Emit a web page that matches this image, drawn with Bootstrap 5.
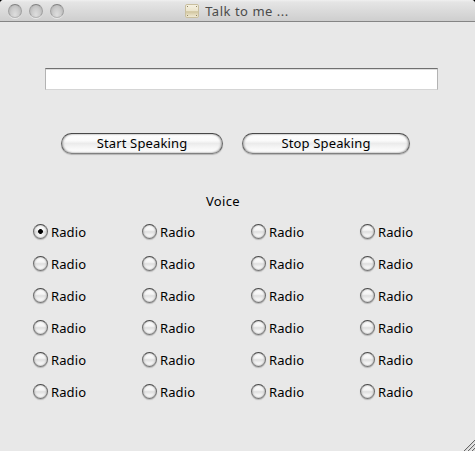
<!DOCTYPE html>
<html lang="en">
<head>
<meta charset="utf-8">
<meta name="viewport" content="width=device-width, initial-scale=1">
<title>Talk to me ...</title>
<link href="https://cdn.jsdelivr.net/npm/bootstrap@5.3.0/dist/css/bootstrap.min.css" rel="stylesheet">
<style>
html { background: #000; }
body { background: transparent; font: 13px/16px "Lucida Grande", "Noto Sans", "Open Sans", sans-serif; color: #000; }
.window { width: 475px; height: 451px; background: #e8e8e8; border-radius: 4px 4px 0 0; }
.titlebar { height: 22px; padding-right: 2px; background: linear-gradient(#f0f0f0 0, #e5e5e5 10%, #cecece 100%); border-bottom: 1px solid #858585; }
.lights { left: 8px; top: 4px; gap: 7px; }
.light { width: 14px; height: 14px; border-radius: 50%; border: 1px solid #a0a0a0; border-top-color: #808080; border-bottom-color: #b5b5b5; background: radial-gradient(ellipse at 50% 80%, #dedede 0, #cbcbcb 50%, #aaa 100%); box-shadow: 0 1px 0 #e9e9e9; }
.caption { color: #4b4b4b; font-size: 13px; letter-spacing: .52px; margin-left: 5px; }
.entry { width: 393px; height: 22px; margin: 46px 0 0 45px; padding: 0 3px; font-size: 13px; border-radius: 0; border: 1px solid #b3b3b3; border-top-color: #707070; border-bottom-color: #d5d5d5; box-shadow: inset 0 1px 0 #dedede; }
.actions { margin: 43px 0 0 61px; gap: 19px; }
.aqua { --bs-btn-color: #000; height: 21px; padding: 0 0 1px; font-size: 13px; line-height: 17px; letter-spacing: .15px; border: 1px solid #666; border-top-color: #484848; border-bottom-color: #808080; border-radius: 11px; background: linear-gradient(#fff 0, #fafafa 35%, #ebebeb 50%, #f5f5f5 70%, #fff 100%); box-shadow: 0 1px 1px #b5b5b5, inset 1px 0 2px #aaa, inset -1px 0 2px #aaa; }
.start { width: 162px; }
.stop { width: 168px; }
.voice { margin: 39px 0 0 206px; letter-spacing: .3px; }
.voices { margin: 14px 0 0 33px; grid-template-columns: repeat(4, 109px); grid-auto-rows: 32px; }
.voices label { height: 17px; gap: 3px; }
.voices span { padding-top: 1px; letter-spacing: .1px; }
.voices .form-check-input { width: 15px; height: 15px; margin: 0 0 1px; border: 1px solid #6f6f6f; border-top-color: #484848; border-bottom-color: #777; background: linear-gradient(#fff 0, #f4f4f4 40%, #dedede 52%, #f2f2f2 75%, #fff 100%); box-shadow: 0 1px 1px #b5b5b5, inset 0 0 2px #888; }
.voices .form-check-input:checked { background: radial-gradient(circle at 50% 50%, #000 0 2px, transparent 2.8px), linear-gradient(#fff 0, #f4f4f4 40%, #dedede 52%, #f2f2f2 75%, #fff 100%); }
.grip { right: 0; bottom: 0; }
</style>
<script src="https://cdn.jsdelivr.net/npm/bootstrap@5.3.0/dist/js/bootstrap.bundle.min.js"></script>
</head>
<body class="overflow-hidden">
<main class="window position-relative overflow-hidden">
  <header class="titlebar position-relative d-flex align-items-center justify-content-center">
    <div class="lights position-absolute d-flex"><span class="light"></span><span class="light"></span><span class="light"></span></div>
    <svg width="16" height="16" viewBox="0 0 16 16" aria-hidden="true">
      <defs><linearGradient id="plate" x2="0" y2="1"><stop stop-color="#f6f2e4"/><stop offset=".5" stop-color="#ebe4cb"/><stop offset=".55" stop-color="#cfc49d"/><stop offset=".75" stop-color="#e1d8b9"/><stop offset="1" stop-color="#f1ecd8"/></linearGradient></defs>
      <rect x="1.5" y="1.5" width="13" height="13" rx="1.5" fill="url(#plate)" stroke="#c9bf9f"/>
      <path d="M3 3.5h1M12 3.5h1M3 12.5h1M12 12.5h1" stroke="#8f8466"/>
    </svg>
    <span class="caption">Talk to me ...</span>
  </header>
  <input class="entry form-control" type="text" aria-label="Text to speak">
  <div class="actions d-flex">
    <button class="btn aqua start" type="button">Start Speaking</button>
    <button class="btn aqua stop" type="button">Stop Speaking</button>
  </div>
  <div class="voice">Voice</div>
  <div class="voices d-grid" id="voices"></div>
  <svg class="grip position-absolute" width="13" height="13" viewBox="0 0 13 13" aria-hidden="true">
    <path d="M2 13 13 2M6 13 13 6M10 13 13 10" stroke="#666" fill="none"/>
    <path d="M3.3 13 13 3.3M7.3 13 13 7.3M11.3 13 13 11.3" stroke="#c2c2c2" stroke-width=".7" fill="none"/>
  </svg>
</main>
<script>
  document.getElementById('voices').innerHTML = Array.from({ length: 24 }, (_, i) =>
    `<label class="d-flex align-items-center"><input class="form-check-input" type="radio" name="voice"${i ? '' : ' checked'}><span>Radio</span></label>`).join('');
</script>
</body>
</html>
